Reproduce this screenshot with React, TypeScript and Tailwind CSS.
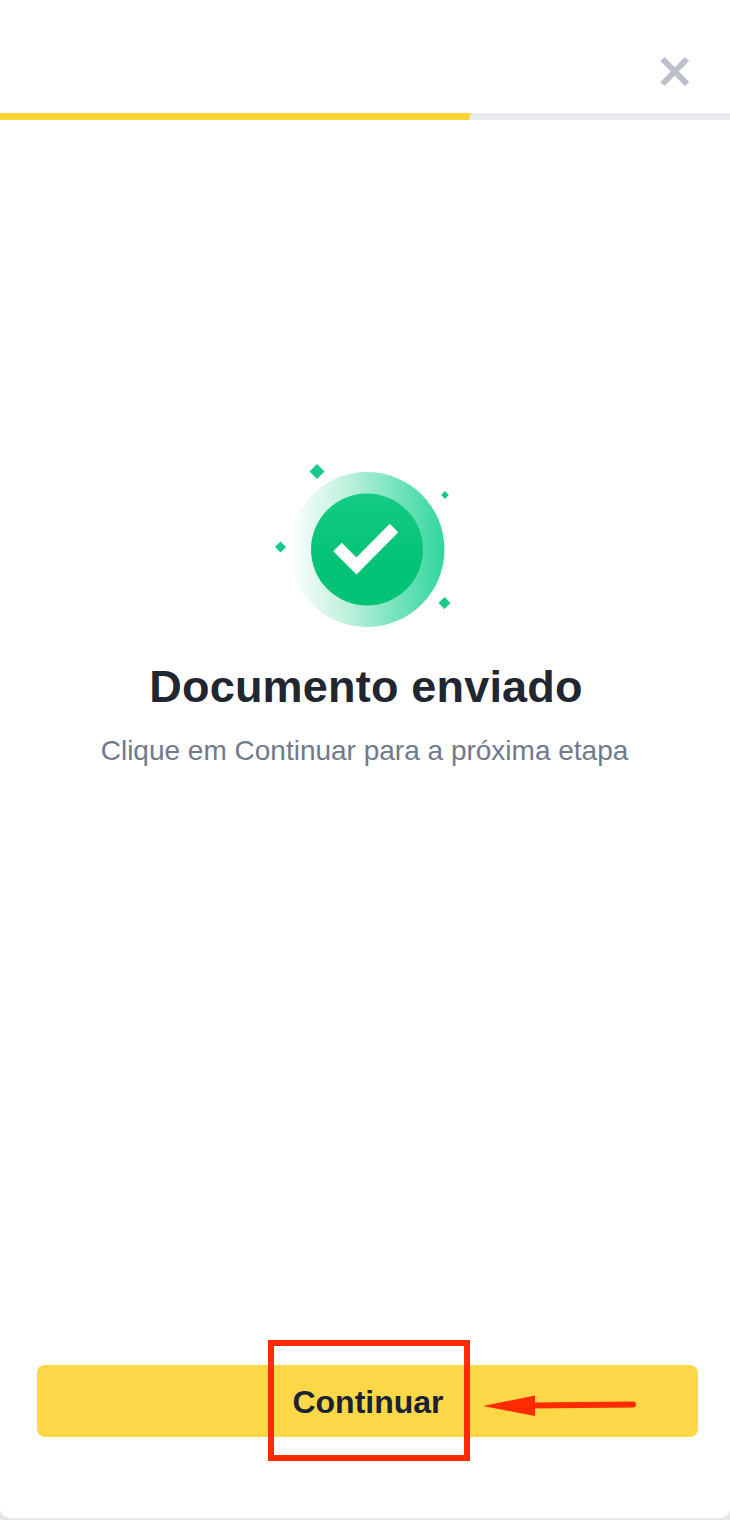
export default function App() {
  return (
    <div className="h-[1520px] w-[730px] bg-[#e6e6e6] overflow-hidden" style={{ fontFamily: '"Liberation Sans", Arial, sans-serif' }}>
      <div className="relative flex h-[1518px] w-full flex-col rounded-b-[10px] bg-white">
        <header className="flex h-[113px] shrink-0 items-start justify-end pr-[39px] pt-[55px]">
          <svg width="32" height="34" viewBox="0 0 32 34" aria-label="Fechar">
            <path d="M3.5 4 L28 29 M28 4 L3.5 29" stroke="#bcc0cb" strokeWidth="6" fill="none" />
          </svg>
        </header>
        <div className="h-[7px] w-full shrink-0 bg-[#e9eaee]">
          <div className="h-full w-[471px] bg-[#fdd537] [clip-path:polygon(0_0,100%_0,99.5%_100%,0_100%)]" />
        </div>
        <main className="flex flex-col items-center pl-[2px] pt-[340px]">
          <svg width="190" height="180" viewBox="0 0 190 180" className="block">
            <defs>
              <linearGradient id="ring" x1="0" y1="0" x2="1" y2="0">
                <stop offset="0" stopColor="#ffffff" />
                <stop offset="0.35" stopColor="#c2f1de" />
                <stop offset="1" stopColor="#31d69e" />
              </linearGradient>
              <linearGradient id="disc" x1="0" y1="0" x2="0" y2="1">
                <stop offset="0" stopColor="#14cb84" />
                <stop offset="0.6" stopColor="#03c377" />
                <stop offset="1" stopColor="#03c377" />
              </linearGradient>
            </defs>
            <circle cx="96" cy="89.5" r="77.5" fill="url(#ring)" />
            <circle cx="96" cy="89.5" r="56" fill="url(#disc)" />
            <path d="M66.5 87 L85.5 106 L123 68" stroke="#ffffff" strokeWidth="12" fill="none" strokeLinecap="butt" />
            <path d="M46 4 L53.5 11.5 L46 19 L38.5 11.5 Z" fill="#17ca8a" />
            <path d="M174 31 L177.8 35 L174 39 L170.2 35 Z" fill="#17ca8a" />
            <path d="M9.5 81.5 L15 87 L9.5 92.5 L4 87 Z" fill="#17ca8a" />
            <path d="M173.5 137 L179.5 143 L173.5 149 L167.5 143 Z" fill="#17ca8a" />
          </svg>
          <h1 className="mt-[22px] text-[45px] font-bold leading-[50px] tracking-[0.2px] text-[#212631]">Documento enviado</h1>
          <p className="mt-[23px] pr-[3px] text-[28px] leading-[32px] text-[#707a8a]">Clique em Continuar para a próxima etapa</p>
        </main>
        <div className="absolute bottom-[81px] left-[37px] right-[32px]">
          <button className="flex h-[72px] w-full items-center justify-center rounded-[8px] bg-[#fcd849] pl-[1px] pt-[2px] text-[32px] font-bold text-[#1a2035]">
            Continuar
          </button>
        </div>
        <div className="absolute left-[268px] top-[1340px] h-[121px] w-[202px] border-[6px] border-[#ff2a00]" />
        <svg className="absolute left-[480px] top-[1390px]" width="160" height="30" viewBox="0 0 160 30">
          <path d="M3 16 L55 5.5 L55 26 Z" fill="#ff2a00" />
          <path d="M50 15.5 L153 14.5" stroke="#ff2a00" strokeWidth="6" strokeLinecap="round" fill="none" />
        </svg>
      </div>
    </div>
  );
}
